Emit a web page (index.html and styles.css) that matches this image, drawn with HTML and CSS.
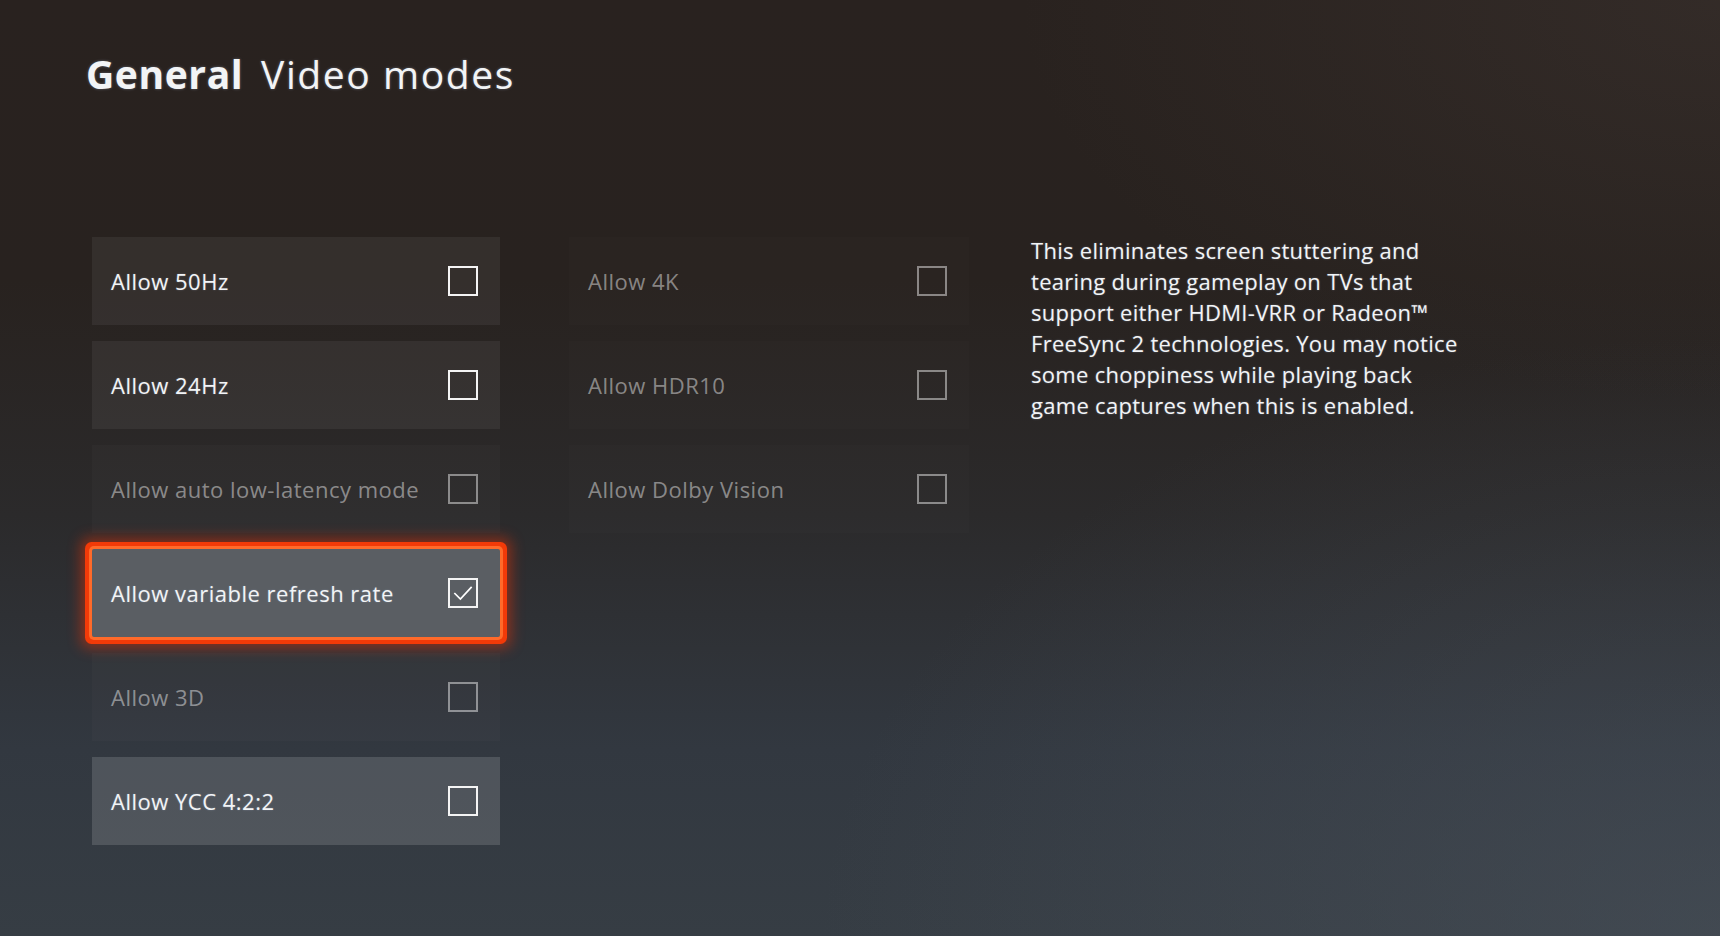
FILE: index.html
```html
<!DOCTYPE html>
<html lang="en">
<head>
    <meta charset="UTF-8">
    <meta name="viewport" content="width=device-width, initial-scale=1.0">
    <title>General Video modes</title>
    <link rel="stylesheet" href="styles.css">
</head>
<body>

<div id="screen">

    <h1 class="title"><span class="title-main">General</span> Video modes</h1>

    <div class="content">

        <div class="column column-left">
            <div class="row">
                <span class="label">Allow 50Hz</span>
                <span class="box"></span>
            </div>
            <div class="row">
                <span class="label">Allow 24Hz</span>
                <span class="box"></span>
            </div>
            <div class="row disabled">
                <span class="label">Allow auto low-latency mode</span>
                <span class="box"></span>
            </div>
            <div class="row focused">
                <span class="label">Allow variable refresh rate</span>
                <span class="box">
                    <svg viewBox="0 0 30 30" width="26" height="26">
                        <polyline points="5,15 12,22 25,8" fill="none" stroke="#fff" stroke-width="2"/>
                    </svg>
                </span>
            </div>
            <div class="row disabled">
                <span class="label">Allow 3D</span>
                <span class="box"></span>
            </div>
            <div class="row lit">
                <span class="label">Allow YCC 4:2:2</span>
                <span class="box"></span>
            </div>
        </div>

        <div class="column column-mid">
            <div class="row disabled">
                <span class="label">Allow 4K</span>
                <span class="box"></span>
            </div>
            <div class="row disabled">
                <span class="label">Allow HDR10</span>
                <span class="box"></span>
            </div>
            <div class="row disabled">
                <span class="label">Allow Dolby Vision</span>
                <span class="box"></span>
            </div>
        </div>

        <p class="desc">
            This eliminates screen stuttering and<br>
            tearing during gameplay on TVs that<br>
            support either HDMI-VRR or Radeon&trade;<br>
            FreeSync 2 technologies. You may notice<br>
            some choppiness while playing back<br>
            game captures when this is enabled.
        </p>

    </div>

</div>

</body>
</html>
```

FILE: styles.css
```css
body {
    margin: 0;
    font-family: "Open Sans", "Noto Sans", sans-serif;
    color: #f2f4f6;
}

#screen {
    width: 1720px;
    height: 936px;
    overflow: hidden;
    background:
        radial-gradient(ellipse 900px 600px at 100% 100%, rgba(80, 88, 98, 0.45), transparent),
        radial-gradient(ellipse 700px 400px at 100% 0%, rgba(70, 60, 56, 0.35), transparent),
        linear-gradient(180deg, #29221f 0%, #28221f 30%, #2b2a2b 55%, #323840 80%, #363d44 100%);
}

.title {
    margin: 0;
    padding: 51px 0 0 86px;
    font-size: 39px;
    line-height: 1.2;
    font-weight: 400;
    letter-spacing: 1.6px;
    text-shadow: 0 0 3px rgba(200, 220, 255, 0.35);
}

.title-main {
    font-weight: 700;
    letter-spacing: 0.6px;
    margin-right: 6px;
}

.content {
    display: flex;
    align-items: flex-start;
    margin-top: 139px;
    padding-left: 92px;
}

.column {
    display: flex;
    flex-direction: column;
    gap: 16px;
}

.column-left {
    width: 408px;
}

.column-mid {
    width: 400px;
    margin-left: 69px;
}

.row {
    height: 88px;
    display: flex;
    align-items: center;
    justify-content: space-between;
    padding: 0 22px 0 19px;
    background-color: rgba(255, 255, 255, 0.06);
    box-sizing: border-box;
}

.label {
    font-size: 22px;
    letter-spacing: 0.5px;
    text-shadow: 0 0 2px rgba(200, 220, 255, 0.3);
}

.box {
    width: 30px;
    height: 30px;
    box-sizing: border-box;
    border: 2.5px solid #f4f4f4;
    display: flex;
    align-items: center;
    justify-content: center;
}

.row.disabled {
    background-color: rgba(255, 255, 255, 0.02);
}

.column-mid .row.disabled {
    background-color: rgba(255, 255, 255, 0.012);
}

.row.disabled .label {
    color: rgba(255, 255, 255, 0.45);
    text-shadow: none;
}

.row.disabled .box {
    border: 2px solid rgba(255, 255, 255, 0.45);
}

.row.lit {
    background-color: rgba(255, 255, 255, 0.14);
}

.row.focused {
    background-color: #5a5e63;
    box-shadow:
        0 0 0 3px #ff6a2a,
        0 0 0 7px #f23a08,
        0 0 14px 11px rgba(255, 50, 0, 0.45);
    border-radius: 2px;
}

.desc {
    margin: -2px 0 0 62px;
    font-size: 22px;
    line-height: 31px;
    letter-spacing: 0.3px;
    text-shadow: 0 0 2px rgba(200, 220, 255, 0.35);
}
```
